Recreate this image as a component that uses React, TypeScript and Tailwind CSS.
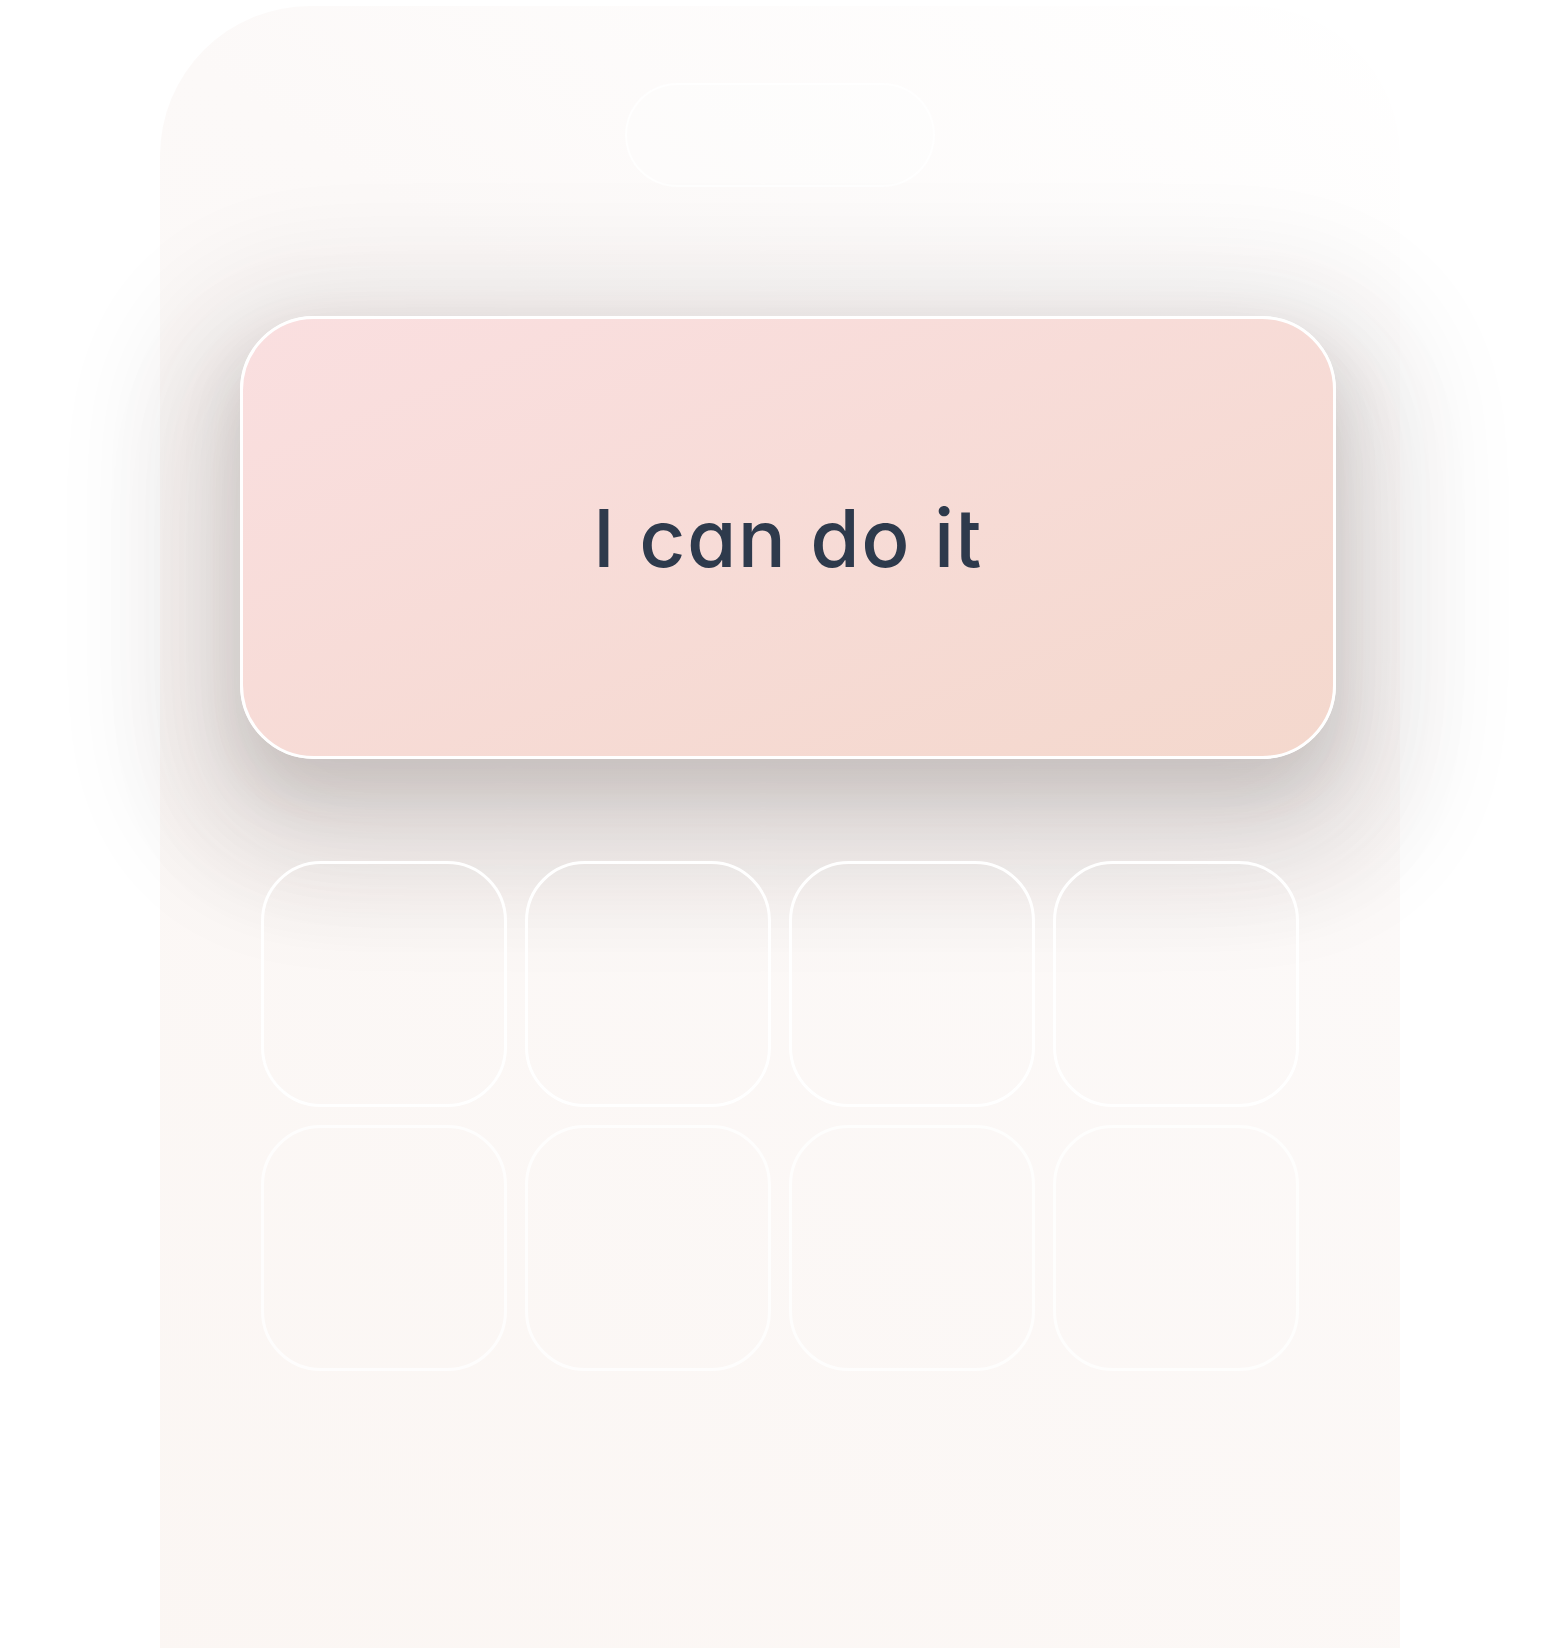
import React from "react";

export default function App() {
  const tiles = Array.from({ length: 8 }, (_, i) => i);

  return (
    <div className="relative w-full h-[1648px] overflow-hidden bg-white font-['Inter',sans-serif]">
      {/* Phone frame */}
      <div className="ml-[160px] mt-[6px] w-[1240px] h-[1720px] rounded-t-[150px] bg-[linear-gradient(215deg,#ffffff_0%,#fcf9f8_35%,#fbf6f3_100%)] flex flex-col">
        {/* Notch */}
        <div className="self-center mt-[77px] w-[310px] h-[104px] rounded-full border-2 border-white/80 bg-white/30" />

        {/* Affirmation card */}
        <div className="ml-[80px] mt-[129px] w-[1096px] h-[443px] rounded-[74px] border-[3px] border-white bg-gradient-to-br from-[#fadfe0] to-[#f4d8cd] shadow-[0_40px_110px_90px_rgba(50,35,30,0.065),0_60px_120px_30px_rgba(50,35,30,0.09),0_30px_60px_rgba(50,35,30,0.13)] flex items-center justify-center">
          <span className="text-[80px] font-medium text-[#2e3a4c] leading-none tracking-[1.5px]">
            I<span className="[font-feature-settings:'salt']"> can do it</span>
          </span>
        </div>

        {/* App grid */}
        <div className="ml-[101px] mt-[102px] grid grid-cols-4 gap-[18px] w-[1038px]">
          {tiles.map((i) => (
            <div
              key={i}
              className={`h-[246px] rounded-[60px] border-[3px] ${
                i < 4 ? "border-white" : "border-white/80"
              }`}
            />
          ))}
        </div>
      </div>
    </div>
  );
}
